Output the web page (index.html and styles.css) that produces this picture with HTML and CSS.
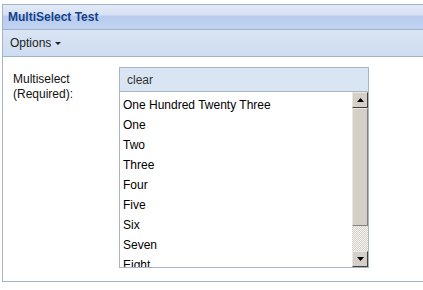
FILE: index.html
```html
<!DOCTYPE html>
<html>
<head>
<meta charset="utf-8">
<link rel="stylesheet" href="styles.css">
</head>
<body>
<div class="panel">
  <div class="header">MultiSelect Test</div>
  <div class="toolbar"><span class="menu">Options<span class="caret"></span></span></div>
  <div class="body">
    <div class="field">
      <label class="label">Multiselect<br>(Required):</label>
      <div class="listbox">
        <div class="clear">clear</div>
        <div class="listarea">
          <div class="items">
            <div class="item">One Hundred Twenty Three</div>
            <div class="item">One</div>
            <div class="item">Two</div>
            <div class="item">Three</div>
            <div class="item">Four</div>
            <div class="item">Five</div>
            <div class="item">Six</div>
            <div class="item">Seven</div>
            <div class="item">Eight</div>
          </div>
          <div class="scrollbar">
            <div class="sbtn"><svg width="7" height="4" viewBox="0 0 7 4"><path d="M3.5 0 L7 4 L0 4 Z" fill="#000"/></svg></div>
            <div class="thumb"></div>
            <div class="track"></div>
            <div class="sbtn"><svg width="7" height="4" viewBox="0 0 7 4"><path d="M0 0 L7 0 L3.5 4 Z" fill="#000"/></svg></div>
          </div>
        </div>
      </div>
    </div>
  </div>
</div>
</body>
</html>
```
FILE: styles.css
```css
html, body { margin: 0; padding: 0; background: #fff; overflow: hidden; }
body { font-family: "Liberation Sans", Arial, sans-serif; font-size: 12px; color: #000; width: 423px; height: 290px; }
.panel {
  margin: 4px 0 0 2px;
  width: 440px;
  border-left: 1px solid #a3b3c9;
  border-top: 1px solid #a3b3c9;
  border-bottom: 1px solid #a3b3c9;
}
.header {
  height: 24px;
  line-height: 25px;
  padding-left: 5px;
  font-weight: bold;
  font-size: 12px;
  color: #15428b;
  background: linear-gradient(#e2eaf6 0, #d5e0f1 42%, #b8cbec 46%, #c2d3f2 100%);
  border-bottom: 1px solid #9fb3cc;
}
.toolbar {
  height: 26px;
  background: linear-gradient(#d9e5f4, #cedcf0);
  border-bottom: 1px solid #9fb3cc;
  display: flex;
  align-items: center;
  padding-left: 7px;
}
.menu { color: #222; font-size: 12px; display: flex; align-items: center; }
.caret {
  display: inline-block;
  margin-left: 4px;
  border-left: 3px solid transparent;
  border-right: 3px solid transparent;
  border-top: 3px solid #222;
  margin-top: 1px;
}
.body { height: 224px; padding: 10px 0 0 10px; box-sizing: border-box; }
.field { display: flex; }
.label { width: 106px; line-height: 15px; padding-top: 5px; color: #111; font-size: 12px; }
.listbox {
  width: 248px;
  border: 1px solid #a7b4c4;
  display: flex;
  flex-direction: column;
  height: 199px;
}
.clear {
  height: 23px;
  line-height: 24px;
  padding-left: 7px;
  background: #dae5f3;
  border-bottom: 1px solid #a7b4c4;
  color: #333;
}
.listarea { flex: 1; display: flex; overflow: hidden; }
.items { flex: 1; overflow: hidden; padding-top: 3px; }
.item { height: 20px; line-height: 20px; padding-left: 3px; }
.scrollbar { width: 16px; display: flex; flex-direction: column; background: #f1efea; }
.sbtn {
  height: 16px;
  box-sizing: border-box;
  background: #d4d0c8;
  border-top: 1px solid #e9e7e3;
  border-left: 1px solid #e9e7e3;
  border-right: 1px solid #404040;
  border-bottom: 1px solid #404040;
  display: flex; align-items: center; justify-content: center;
}
.thumb {
  height: 118px;
  box-sizing: border-box;
  background: #d4d0c8;
  border-top: 1px solid #e9e7e3;
  border-left: 1px solid #e9e7e3;
  border-right: 1px solid #808080;
  border-bottom: 1px solid #808080;
}
.track {
  flex: 1;
  background-color: #f4f3f0;
  background-image: repeating-conic-gradient(#d4d0c8 0 25%, #f4f3f0 0 50%);
  background-size: 2px 2px;
}
```
